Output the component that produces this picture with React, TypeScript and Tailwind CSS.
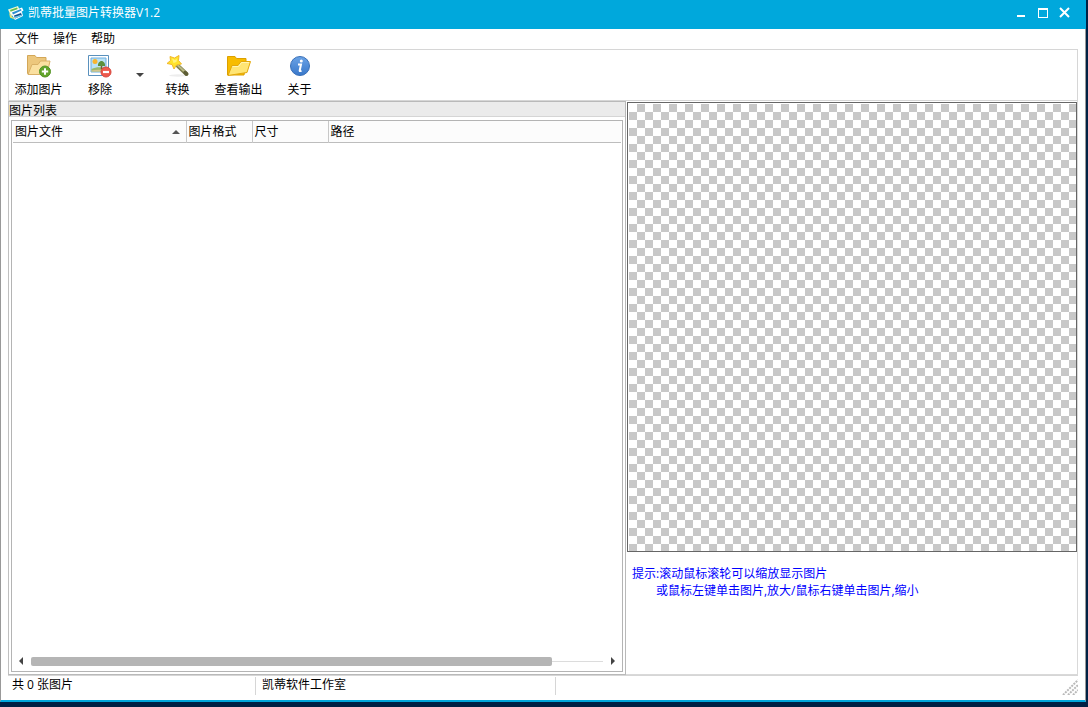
import type { ReactNode } from 'react';

const MENUS = ['文件', '操作', '帮助'];

const COLUMNS = [
  { label: '图片文件', width: 173, sorted: true },
  { label: '图片格式', width: 66 },
  { label: '尺寸', width: 76 },
  { label: '路径' },
];

function LogoIcon() {
  return (
    <svg width="16" height="16" viewBox="0 0 16 16" aria-hidden="true">
      <path d="M0 4.500 10 1l2 5-9 5z" fill="#f3f8d0" />
      <path d="M2 5l7-2.500 1 2-7 3z" fill="#63bd4d" />
      <path d="M2 7 14 2.500l1.500 3L6 12z" fill="#fff" />
      <path d="M4 7.500l9-3.500.500 1.500L5 9.500z" fill="#2b8fd0" />
      <path d="M4 10c4 1 6-3 10-3l1 4-8 4z" fill="#f8fcff" />
      <path d="M6 10.500l7-2.500 1 2.500-7 3z" fill="#174e8c" />
      <path d="M7 11.500c3 0 4-2 6.500-1.500l.500.500-7 3z" fill="#6fd0ee" />
      <path d="M1 7.500l2 3 4 4-5-2z" fill="#f3e069" />
    </svg>
  );
}

function AddIcon() {
  return (
    <svg width="24" height="24" viewBox="0 0 24 24" aria-hidden="true">
      <path d="M.500 19.500V1.500H8l1.500 2h9.500v16z" fill="#ecc77d" stroke="#d3a758" />
      <path d="M1 20.500 5 10.500h6l2.500-3.500h9.500l-3 13.500z" fill="#fae0a0" stroke="#d9b066" />
      <circle cx="18" cy="17.500" r="5.500" fill="#62a42b" stroke="#559426" />
      <path d="M18 14.300v6.400M14.800 17.500h6.400" stroke="#fff" strokeWidth="2" />
    </svg>
  );
}

function RemoveIcon() {
  return (
    <svg width="24" height="24" viewBox="0 0 24 24" aria-hidden="true">
      <path d="M.500 1.500h20v20H.500z" fill="#fff" stroke="#5a91bd" />
      <path d="M3 4h15v14H3z" fill="#b9e2f6" stroke="#6faee0" />
      <path d="M3.500 15c4-2 9-2 14-1v3.500h-14z" fill="#9ab96b" />
      <path d="M3.500 16.500c4-1 9-1 14 0v1h-14z" fill="#d6c58e" />
      <circle cx="7" cy="7.500" r="2.500" fill="#f8b52e" />
      <path d="M13.500 11v4" stroke="#785b32" strokeWidth="1.500" />
      <path d="M13.500 7c2 0 4 2.500 3.500 5h-7c-.500-2.500 1.500-5 3.500-5z" fill="#5c8f3c" />
      <circle cx="18" cy="18" r="5" fill="#ed5a4d" stroke="#d8463d" />
      <path d="M15 18h6" stroke="#fff" strokeWidth="2.200" />
    </svg>
  );
}

function WandIcon() {
  return (
    <svg width="24" height="24" viewBox="0 0 24 24" aria-hidden="true">
      <ellipse cx="12" cy="21.500" rx="9" ry="1.200" fill="#ededed" />
      <path d="m12 12 8.500 8" stroke="#7c7c4c" strokeWidth="4" strokeLinecap="round" />
      <path d="m12 11.500 8 7.500" stroke="#b9b985" strokeWidth="1.800" strokeLinecap="round" />
      <path d="m19 18.500 1.500 1.500" stroke="#5d5d36" strokeWidth="3.500" strokeLinecap="round" />
      <path d="m4 2.500 4.500 1.500L13 1.500l-.500 5 3 3.500-5 1-2.500 4-2-4.500L1 9.500l3.500-3z" fill="#ffe32a" stroke="#f2b82a" />
      <path d="m6 4.500 3 1.500 2-1-.500 3-3 1z" fill="#fff27c" />
    </svg>
  );
}

function FolderIcon() {
  return (
    <svg width="24" height="24" viewBox="0 0 24 24" aria-hidden="true">
      <path d="M.500 21V2.500H8l1.500 2H19v4L17 21z" fill="#f7bc00" stroke="#dda000" />
      <path d="M1 21.500 5 11.500h6L14 7.500h9.500L20 18.500z" fill="#ffe574" stroke="#e3a80b" />
      <path d="M5.500 12.500h6l3-4H22" fill="none" stroke="#fff5b4" />
    </svg>
  );
}

function InfoIcon() {
  return (
    <svg width="24" height="24" viewBox="0 0 24 24" aria-hidden="true">
      <defs>
        <linearGradient id="info" x2="0" y2="1">
          <stop stopColor="#6ba3e6" />
          <stop offset="1" stopColor="#3978ca" />
        </linearGradient>
      </defs>
      <circle cx="12" cy="12" r="9.500" fill="url(#info)" stroke="#3970b8" />
      <circle cx="13.300" cy="7" r="1.500" fill="#fff" />
      <path d="M10 10.500h3l-1.300 6q-.200 1 1.800.300" fill="none" stroke="#fff" strokeWidth="2" />
    </svg>
  );
}

function ToolButton({ icon, label, width }: { icon: ReactNode; label: string; width: string }) {
  return (
    <button type="button" className={`flex flex-col items-center gap-1 pt-1 ${width}`}>
      {icon}
      <span>{label}</span>
    </button>
  );
}

function TitleBar() {
  return (
    <header className="flex h-[29px] items-center bg-[#00a8dc] pb-1 pl-2 text-white">
      <LogoIcon />
      <h1 className="ml-1 flex-1">凯蒂批量图片转换器V1.2</h1>
      <div className="flex items-center gap-[6px] pr-[13px]">
        <button type="button" aria-label="最小化">
          <svg width="16" height="16"><path d="M4 10h8v2H4z" fill="#fff" /></svg>
        </button>
        <button type="button" aria-label="最大化">
          <svg width="16" height="16"><path d="M3 3h10v10H3zM4 5v7h8V5z" fill="#fff" fillRule="evenodd" /></svg>
        </button>
        <button type="button" aria-label="关闭">
          <svg width="16" height="16"><path d="m3 3 9 9M12 3l-9 9" stroke="#fff" strokeWidth="2" /></svg>
        </button>
      </div>
    </header>
  );
}

function FileList() {
  return (
    <section className="flex min-w-0 flex-1 flex-col border border-l-[#c0c0c0] border-[#b9b9b9]">
      <h2 className="h-[15px] border-b border-[#d5d5d5] bg-[#ebebeb] leading-[17px]">图片列表</h2>
      <div className="mx-0.5 mt-[3px] mb-0.5 flex flex-1 flex-col border border-[#b4b4b4]">
        <div className="flex-1 px-px">
          <table className="w-full table-fixed border-collapse bg-[#fcfcfc]">
            <thead>
              <tr className="h-[21px] border-b border-[#bdbdbd]">
                {COLUMNS.map((col) => (
                  <th
                    key={col.label}
                    style={{ width: col.width }}
                    className="border-r border-[#c8c8c8] px-0.5 pt-0.5 pb-0 text-left font-normal last:border-r-0"
                  >
                    <span className="flex items-center justify-between">
                      {col.label}
                      {col.sorted && (
                        <svg width="8" height="4" className="mr-1"><path d="M0 4 4 0l4 4z" fill="#555" /></svg>
                      )}
                    </span>
                  </th>
                ))}
              </tr>
            </thead>
            <tbody />
          </table>
        </div>
        {/* Horizontal scrollbar */}
        <div className="flex h-5 items-center px-[7px]">
          <button type="button" aria-label="向左滚动">
            <svg width="4" height="8"><path d="M4 0v8L0 4z" fill="#444" /></svg>
          </button>
          <div className="mx-2 flex flex-1 items-center">
            <div className="h-[9px] w-[91%] rounded-xs bg-[#b5b5b5]" />
            <div className="h-px flex-1 bg-[#dcdcdc]" />
          </div>
          <button type="button" aria-label="向右滚动">
            <svg width="4" height="8"><path d="M0 0v8l4-4z" fill="#444" /></svg>
          </button>
        </div>
      </div>
    </section>
  );
}

function Preview() {
  return (
    <aside className="w-[452px] border-r border-b border-[#d9d9d9] pt-px pl-px">
      <div className="h-[450px] border border-[#666] bg-[conic-gradient(#fff_25%,#c8c8c8_0_50%,#fff_0_75%,#c8c8c8_0)] bg-[length:16px_16px] bg-[position:-8px_0px] bg-clip-content bg-origin-content pt-px pl-px" />
      <p className="mt-[13px] ml-[5px] leading-[17px] text-[#0000ff]">
        提示:滚动鼠标滚轮可以缩放显示图片
        <br />
        <span className="ml-6">或鼠标左键单击图片,放大/鼠标右键单击图片,缩小</span>
      </p>
    </aside>
  );
}

export default function App() {
  return (
    <div className="flex min-h-screen flex-col bg-[#002144] pr-0.5 pb-[5px] font-['Open_Sans','Noto_Sans_CJK_SC',sans-serif] text-xs leading-4 text-black">
      <TitleBar />
      <div className="flex flex-1 flex-col border-x border-b-2 border-x-[#999] border-b-[#00a8dc] bg-white px-[7px]">
        <nav className="flex h-5 items-center gap-[14px] pl-[7px]">
          {MENUS.map((menu) => (
            <button key={menu} type="button">{menu}</button>
          ))}
        </nav>

        <div className="flex h-[52px] border border-[#d6d6d6]">
          <ToolButton icon={<AddIcon />} label="添加图片" width="w-[59px]" />
          <ToolButton icon={<RemoveIcon />} label="移除" width="w-16" />
          <button type="button" aria-label="移除选项" className="flex w-4 items-center justify-center">
            <svg width="8" height="4"><path d="M0 0h8L4 4z" fill="#444" /></svg>
          </button>
          <ToolButton icon={<WandIcon />} label="转换" width="w-[59px]" />
          <ToolButton icon={<FolderIcon />} label="查看输出" width="w-[63px]" />
          <ToolButton icon={<InfoIcon />} label="关于" width="w-[59px]" />
        </div>

        <main className="flex flex-1">
          <FileList />
          <Preview />
        </main>

        <footer className="flex h-[25px] border-t border-[#d6d6d6] pt-px">
          <span className="mb-[5px] w-[248px] border-r border-[#d6d6d6] pl-1">共 0 张图片</span>
          <span className="mb-[5px] w-[300px] border-r border-[#d6d6d6] pl-[6px]">凯蒂软件工作室</span>
          <svg width="16" height="16" className="mt-0.5 ml-auto" aria-hidden="true">
            <path d="M1 16 16 1M6 16 16 6M11 16l5-5" stroke="#b9b9b9" strokeWidth="2" strokeDasharray="2 1" />
          </svg>
        </footer>
      </div>
    </div>
  );
}
